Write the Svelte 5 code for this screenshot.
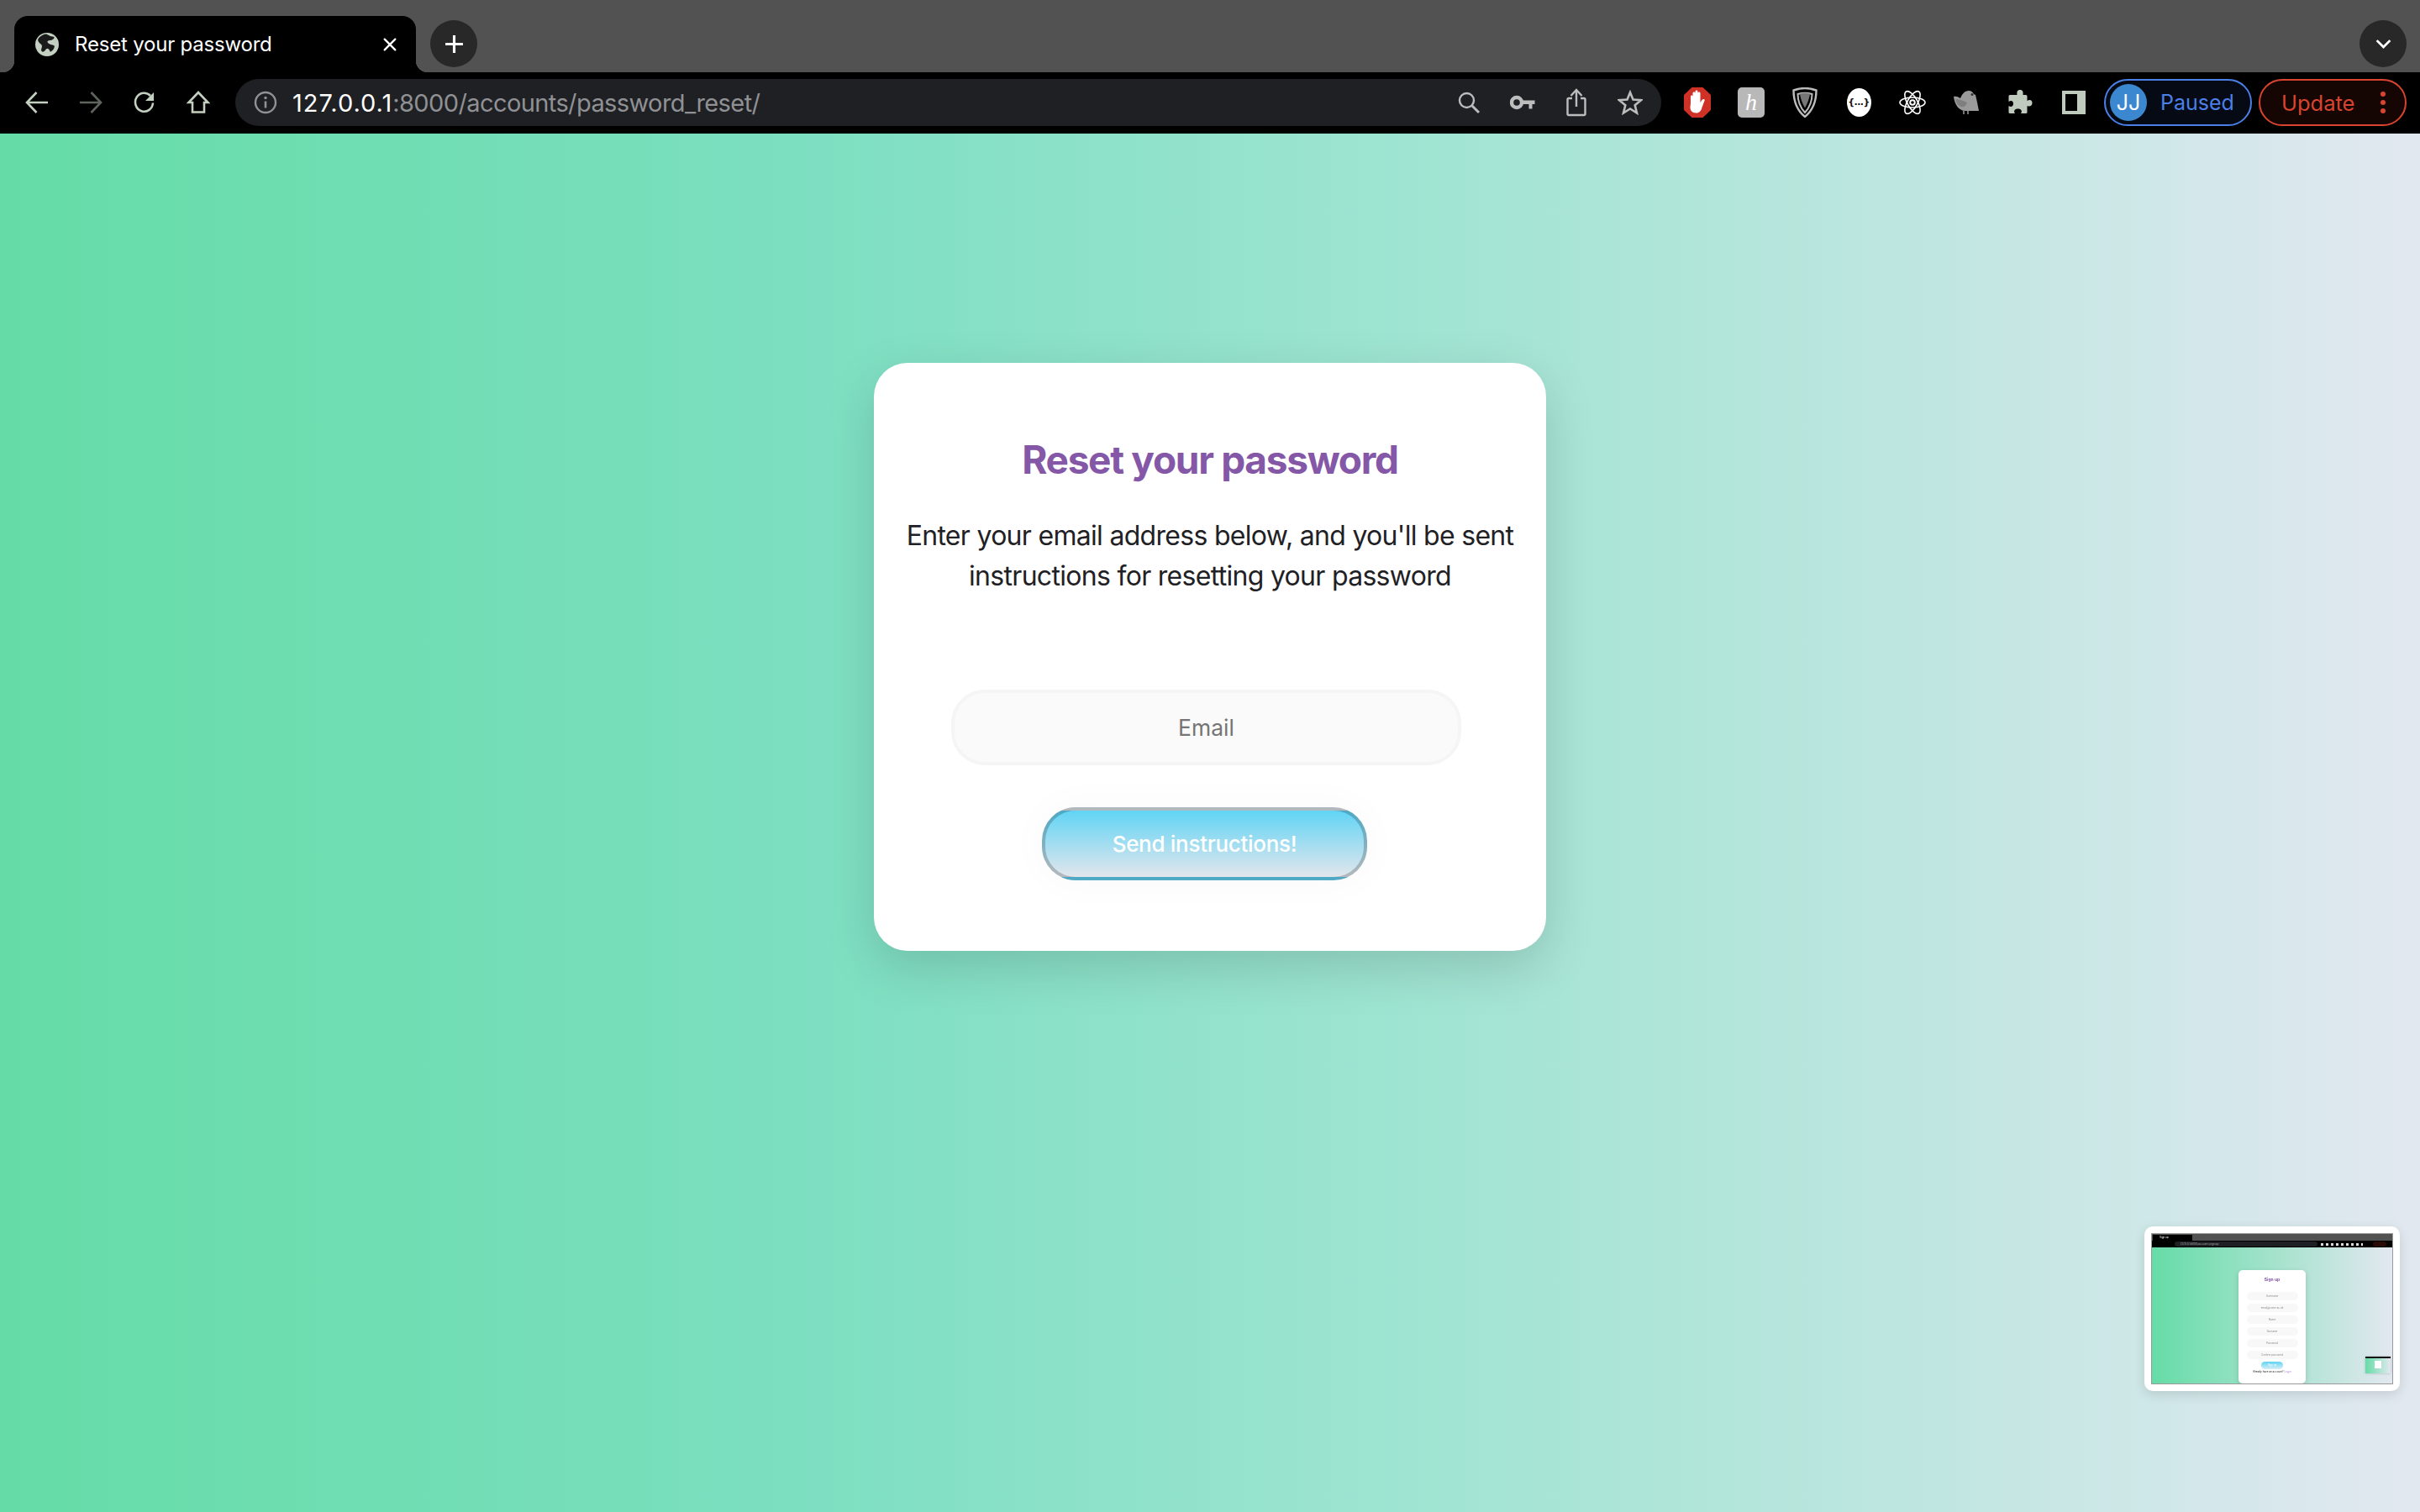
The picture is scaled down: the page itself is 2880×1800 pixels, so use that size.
<script>
  const mini = ['Username','email@some.ac.uk','Name','Surname','Password','Confirm password'];
</script>

<div class="app">
  <header class="chrome">
    <div class="tabs">
      <div class="tab">
        <svg class="fav" viewBox="0 0 28 28"><circle cx="14" cy="14" r="14" fill="#c4d0c2"/><path d="M9 1.500c4 1 8 1 11 .5 1 2-1 5-4 6-3 1.500-3 3-1 4 3 1.500 7 0 9 1 1 4-.500 7-3 9-2-3-5-4-6-2-1 2-1 4-3 5-2 .200-3-1-3-3 0-3 0-5-3-6C4 15 1 14 1 11c1-4 4-8 8-9.500z" fill="#1a1a1a" transform="rotate(18 14 14) scale(.92) translate(1 1)"/></svg>
        <span class="tab-title">Reset your password</span>
        <svg class="close" viewBox="0 0 20 20"><path d="M3 3l14 14M17 3L3 17" stroke="#fff" stroke-width="2.600" stroke-linecap="round"/></svg>
      </div>
      <div class="round new"><svg viewBox="0 0 24 24"><path d="M12 2v20M2 12h20" stroke="#fff" stroke-width="3"/></svg></div>
      <div class="spacer"></div>
      <div class="round more"><svg viewBox="0 0 24 24"><path d="M3 7l9 9 9-9" fill="none" stroke="#fff" stroke-width="3.200"/></svg></div>
    </div>
    <div class="toolbar">
      <div class="ic"><svg viewBox="0 0 28 28" width="28" height="28"><path d="M27 14H2M13.500 2L2 14l11.500 12" class="st"/></svg></div>
      <div class="ic"><svg viewBox="0 0 28 28" width="28" height="28"><path d="M1 14h25M14.500 2L26 14 14.500 26" class="st dim"/></svg></div>
      <div class="ic"><svg viewBox="0 0 28 28" width="28" height="28"><path d="M24 14.500a10.500 11 0 1 1-3-8.500" class="st"/><path d="M25 2v10H15z" fill="#c3cfbf"/></svg></div>
      <div class="ic"><svg viewBox="0 0 28 28" width="28" height="28"><path d="M14 2L2.500 14H7v11.500h14V14h4.500z" class="st"/></svg></div>
      <div class="url">
        <svg class="info" viewBox="0 0 28 28" width="28" height="28"><circle cx="14" cy="14" r="12" fill="none" stroke="#8f9296" stroke-width="2.400"/><circle cx="14" cy="8.500" r="1.700" fill="#8f9296"/><path d="M14 12.500v8" stroke="#8f9296" stroke-width="2.600"/></svg>
        <span class="addr"><b>127.0.0.1</b>:8000/accounts/password_reset/</span>
        <div class="ic"><svg viewBox="0 0 28 28" width="28" height="28"><circle cx="11.500" cy="11.500" r="8.500" fill="none" stroke="#bdbdbd" stroke-width="2.400"/><path d="M18 18l8 8" stroke="#bdbdbd" stroke-width="3"/></svg></div>
        <div class="ic"><svg viewBox="0 0 30 20" width="30" height="20"><circle cx="8" cy="10" r="6" fill="none" stroke="#bdbdbd" stroke-width="4.400"/><path d="M14 7.500h15.500V12h-3v5.500h-4V12H14z" fill="#bdbdbd"/></svg></div>
        <div class="ic"><svg viewBox="0 0 24 34" width="24" height="34"><path d="M7 12H3a1.500 1.500 0 0 0-1.500 1.500v17A1.500 1.500 0 0 0 3 32h18a1.500 1.500 0 0 0 1.500-1.500v-17A1.500 1.500 0 0 0 21 12h-4" fill="none" stroke="#bdbdbd" stroke-width="2.400"/><path d="M12 22V3M5.500 9L12 2l6.500 7" fill="none" stroke="#bdbdbd" stroke-width="2.400"/></svg></div>
        <div class="ic"><svg viewBox="0 0 30 30" width="30" height="30"><path d="M15 3l3.500 8.500 9.500.700-7.300 6 2.300 9.300-8-5-8 5 2.300-9.300-7.300-6 9.500-.700z" fill="none" stroke="#bdbdbd" stroke-width="2.600"/></svg></div>
      </div>
      <div class="exts">
        <div class="ic"><svg viewBox="0 0 32 36" width="32" height="36"><path d="M9.500 0h13L32 9v18l-9.500 9h-13L0 27V9z" fill="#d03126"/><path d="M8 19V11c0-2 2.500-2 2.500 0v5-9c0-2 3-2 3 0v9-11c0-2 3-2 3 0v11-9c0-2 3-2 3 0v11l2-3c1.500-2 4-1 3 1l-3 8c-1 4-3 6.500-7 6.500-5 0-7-3-7-7z" fill="#fff"/></svg></div>
        <div class="ic"><div class="honey">h</div></div>
        <div class="ic"><svg viewBox="0 0 30 36" width="30" height="36"><path d="M15 1c5 0 9 1 13.500 2.500 0 11-3 23-13.500 31.500C4.500 26.500 1.500 14.500 1.500 3.500 6 2 10 1 15 1z" fill="none" stroke="#bdbdbd" stroke-width="2.400"/><path d="M6.500 8c5-1.500 12-1.500 17 0 0 7-3 16-8.500 22C9.500 24 6.500 15 6.500 8z" fill="none" stroke="#bdbdbd" stroke-width="2"/><path d="M9 7.500c4-1 8-1 12 0-.5 5-3 12-6 17-3-5-5.500-12-6-17z" fill="#777"/></svg></div>
        <div class="ic"><div class="json">&#123;...&#125;</div></div>
        <div class="ic"><svg viewBox="-16 -16 32 32" width="32" height="32"><circle r="2.800" fill="none" stroke="#fff" stroke-width="2"/><g fill="none" stroke="#fff" stroke-width="1.600"><ellipse rx="15" ry="6"/><ellipse rx="15" ry="6" transform="rotate(60)"/><ellipse rx="15" ry="6" transform="rotate(120)"/></g></svg></div>
        <div class="ic"><svg viewBox="0 0 32 32" width="32" height="32"><path d="M1 9c3-1 6 .500 8 2 2-5 5-9 10-9 3 0 5 2 6 4l2 1c2 8 3 14 4 19H15C7 26 2 18 1 9z" fill="#9a9a9a"/><path d="M3 12c4 0 10 2 14 4-1 4-4 6-7 5-4-1-6-5-7-9z" fill="#7f7f7f"/><circle cx="23" cy="6.500" r="1.500" fill="#333"/><path d="M13 26v4M18 26v4" stroke="#9a9a9a" stroke-width="1.500"/></svg></div>
        <div class="ic"><svg viewBox="0 0 30 32" width="30" height="32"><path d="M15 1c-3 0-4 2-3.500 6H3a1.500 1.500 0 0 0-1.500 1.500V15c3-2 5.500-1 5.500 2.500S4 22 1.500 20v7.500A1.500 1.500 0 0 0 3 29h6c-2-3-.500-5.500 3.500-5.500s5.500 2.500 3.500 5.500h6a1.500 1.500 0 0 0 1.500-1.500V20c3 1.500 6 0 6-3.500S26.500 12 23.500 14V8.500A1.500 1.500 0 0 0 22 7h-3.500C19 3 18 1 15 1z" fill="#bfcbbd"/></svg></div>
        <div class="ic"><svg viewBox="0 0 28 28" width="28" height="28"><path fill-rule="evenodd" d="M0 0h28v28H0zM4 4v20h14V4z" fill="#bfcbbd"/></svg></div>
      </div>
      <div class="pill paused"><span class="avatar">JJ</span><span class="plabel">Paused</span></div>
      <div class="pill update"><span class="ulabel">Update</span><span class="dots"><i></i><i></i><i></i></span></div>
    </div>
  </header>

  <main class="page">
    <section class="card">
      <h1>Reset your password</h1>
      <p>Enter your email address below, and you'll be sent instructions for resetting your password</p>
      <input type="email" placeholder="Email" />
      <button type="button">Send instructions!</button>
    </section>

    <aside class="thumb">
      <div class="screen">
        <div class="m-tabs"><span class="m-tab">Sign up</span></div>
        <div class="m-bar"><span class="m-url">127.0.0.1:8000/accounts/signup/</span><span class="m-exts"></span><span class="m-up"></span></div>
        <div class="m-page">
          <div class="m-card">
            <div class="m-title">Sign up</div>
            {#each mini as m}<div class="m-input">{m}</div>{/each}
            <div class="m-btn">Sign up</div>
            <div class="m-foot">Already have an account? <span>Log in</span></div>
          </div>
          <div class="m-nest"><div class="m-nest-top"></div><div class="m-nest-card"></div></div>
        </div>
      </div>
    </aside>
  </main>
</div>

<style>
  :global(body) { margin: 0; background: #000; }
  .app { width: 2880px; height: 1800px; overflow: hidden; display: flex; flex-direction: column; font-family: Inter, "Liberation Sans", sans-serif; }
  .chrome { flex: none; height: 159px; background: #000; display: flex; flex-direction: column; }

  .tabs { height: 86px; background: #525252; display: flex; align-items: flex-start; padding: 0 16px 0 17px; box-sizing: border-box; }
  .tab { width: 478px; height: 67px; margin-top: 19px; background: #000; border-radius: 16px 16px 0 0; display: flex; align-items: center; padding: 0 22px 0 25px; box-sizing: border-box; position: relative; }
  .tab::before, .tab::after { content: ""; position: absolute; bottom: 0; width: 14px; height: 14px; }
  .tab::before { left: -14px; background: radial-gradient(circle at 0 0, transparent 14px, #000 14.500px); }
  .tab::after { right: -14px; background: radial-gradient(circle at 100% 0, transparent 14px, #000 14.500px); }
  .fav { width: 28px; height: 28px; flex: none; }
  .tab-title { margin-left: 19px; color: #fff; font-size: 24px; letter-spacing: -0.2px; flex: 1; white-space: nowrap; }
  .close { width: 18px; height: 18px; flex: none; }
  .round { width: 56px; height: 56px; border-radius: 50%; background: #282828; display: flex; align-items: center; justify-content: center; flex: none; margin-top: 24px; }
  .new { margin-left: 17px; }
  .new svg { width: 25px; height: 25px; }
  .more svg { width: 21px; height: 21px; }
  .spacer { flex: 1; }

  .toolbar { flex: 1; display: flex; align-items: center; padding: 0 16px 1px 12px; min-height: 0; }
  .ic { width: 64px; height: 56px; flex: none; display: flex; align-items: center; justify-content: center; }
  .st { fill: none; stroke: #c3cfbf; stroke-width: 2.600; }
  .dim { stroke: #5f655d; }
  .url { margin-left: 12px; width: 1697px; height: 56px; flex: none; border-radius: 28px; background: #1f2023; display: flex; align-items: center; padding: 0 5px 0 22px; box-sizing: border-box; }
  .info { flex: none; }
  .addr { margin-left: 18px; flex: 1; font-size: 29px; color: #8f9194; white-space: nowrap; letter-spacing: -0.6px; }
  .addr b { font-weight: 400; color: #fff; letter-spacing: 1px; }
  .exts { display: flex; margin-left: 11px; }
  .honey { width: 32px; height: 36px; border-radius: 5px; background: #b8b8b8; color: #fff; font: italic 28px/36px "Liberation Serif", serif; text-align: center; }
  .json { width: 29px; height: 34px; border-radius: 50%; background: #fff; color: #111; font: 700 11px/34px "DejaVu Sans", sans-serif; text-align: center; white-space: nowrap; letter-spacing: -0.5px; }

  .pill { width: 176px; height: 56px; box-sizing: border-box; border-radius: 28px; flex: none; display: flex; align-items: center; border: 2px solid; }
  .paused { margin-left: 4px; border-color: #4a80e8; background: #050a14; padding-left: 5px; }
  .avatar { width: 44px; height: 44px; border-radius: 50%; background: #3c88d0; color: #fff; font-size: 25px; line-height: 44px; text-align: center; flex: none; }
  .plabel { margin-left: 16px; color: #4a80e8; font-size: 25px; white-space: nowrap; }
  .update { margin-left: 8px; border-color: #d8442f; background: #150604; padding-left: 25px; }
  .ulabel { color: #d8442f; font-size: 25.500px; white-space: nowrap; }
  .dots { margin-left: 31px; display: flex; flex-direction: column; gap: 4px; }
  .dots i { width: 6px; height: 6px; border-radius: 50%; background: #d8442f; display: block; }

  .page { flex: 1; position: relative; background: linear-gradient(to right, #65dca7 0%, #7cdfc0 33.300%, #9fe4d2 58.300%, #bee6e0 79%, #e2e8f0 100%); display: flex; flex-direction: column; align-items: center; padding-top: 273px; box-sizing: border-box; min-height: 0; }
  .card { width: 800px; height: 700px; box-sizing: border-box; border-radius: 40px; background: #fff; box-shadow: 0 20px 60px rgba(0,0,0,.15); display: flex; flex-direction: column; padding-top: 85px; }
  h1 { margin: 0; font-size: 46px; line-height: 60px; font-weight: 700; color: #8557a7; text-align: center; letter-spacing: -1.300px; }
  p { margin: 37px 20px 0; font-size: 32px; line-height: 48px; color: #1f2125; text-align: center; letter-spacing: -0.7px; }
  input { margin: 111px 0 0 92px; width: 607px; height: 90px; box-sizing: border-box; border: 4px solid #f5f5f5; border-radius: 40px; background: #fafafa; text-align: center; font: 26.500px Inter, sans-serif; outline: none; padding: 0; }
  input::placeholder { color: #757575; opacity: 1; }
  button { margin: 50px 0 0 200px; width: 387px; height: 87px; box-sizing: border-box; border: 4px solid rgba(0,0,0,.2); border-radius: 40px; background: linear-gradient(to bottom, #61d4f5, #e2e6ec); color: #fff; font: 500 26px Inter, sans-serif; letter-spacing: -0.3px; box-shadow: 0 0 50px rgba(0,0,0,.03); padding: 0; }

  .thumb { position: absolute; left: 2552px; top: 1301px; width: 304px; height: 196px; box-sizing: border-box; padding: 8px; background: #fff; border-radius: 10px; box-shadow: 0 4px 14px rgba(0,0,0,.12); }
  .screen { width: 288px; height: 180px; box-sizing: border-box; border: 1px solid #999; display: flex; flex-direction: column; overflow: hidden; filter: blur(.7px); font-family: Inter, sans-serif; }
  .m-tabs { height: 8px; background: #525252; flex: none; display: flex; align-items: flex-end; padding-left: 1px; }
  .m-tab { width: 47px; height: 7px; background: #000; color: #fff; font-size: 3px; line-height: 7px; padding-left: 8px; box-sizing: border-box; }
  .m-bar { height: 8px; background: #000; flex: none; display: flex; align-items: center; padding: 0 2px 0 27px; }
  .m-url { width: 170px; height: 6px; background: #1f2023; border-radius: 3px; color: #aaa; font-size: 3px; line-height: 6px; padding-left: 7px; box-sizing: border-box; flex: none; }
  .m-exts { width: 50px; height: 3px; margin-left: 4px; background: repeating-linear-gradient(to right, #ddd 0 3px, transparent 3px 6px); flex: none; }
  .m-up { width: 16px; height: 6px; margin-left: 12px; background: #2a0a06; border-radius: 3px; flex: none; }
  .m-page { flex: 1; position: relative; background: linear-gradient(to right, #65dca7, #e2e8f0); }
  .m-card { position: absolute; left: 103px; top: 27px; width: 80px; height: 135px; background: #fff; border-radius: 5px; box-shadow: 0 2px 6px rgba(0,0,0,.15); display: flex; flex-direction: column; align-items: center; }
  .m-title { margin: 5px 0 9px; height: 12px; font-size: 5px; line-height: 12px; font-weight: 700; color: #8557a7; }
  .m-input { width: 61px; height: 10px; margin-bottom: 4px; border-radius: 5px; background: #f8f8f8; color: #888; font-size: 3px; line-height: 10px; text-align: center; }
  .m-btn { width: 26px; height: 9px; margin-top: -1px; border-radius: 5px; background: linear-gradient(#61d4f5, #d8eef4); color: #fff; font-size: 3px; line-height: 9px; text-align: center; }
  .m-foot { font-size: 3px; color: #222; margin-top: 1px; white-space: nowrap; }
  .m-foot span { color: #b080d8; }
  .m-nest { position: absolute; left: 254px; top: 130px; width: 30px; height: 20px; background: linear-gradient(to right, #65dca7, #e2e8f0); box-shadow: 0 0 3px rgba(0,0,0,.2); }
  .m-nest-top { height: 2px; background: #111; }
  .m-nest-card { width: 8px; height: 9px; margin: 3px 0 0 11px; background: #fff; }
</style>
